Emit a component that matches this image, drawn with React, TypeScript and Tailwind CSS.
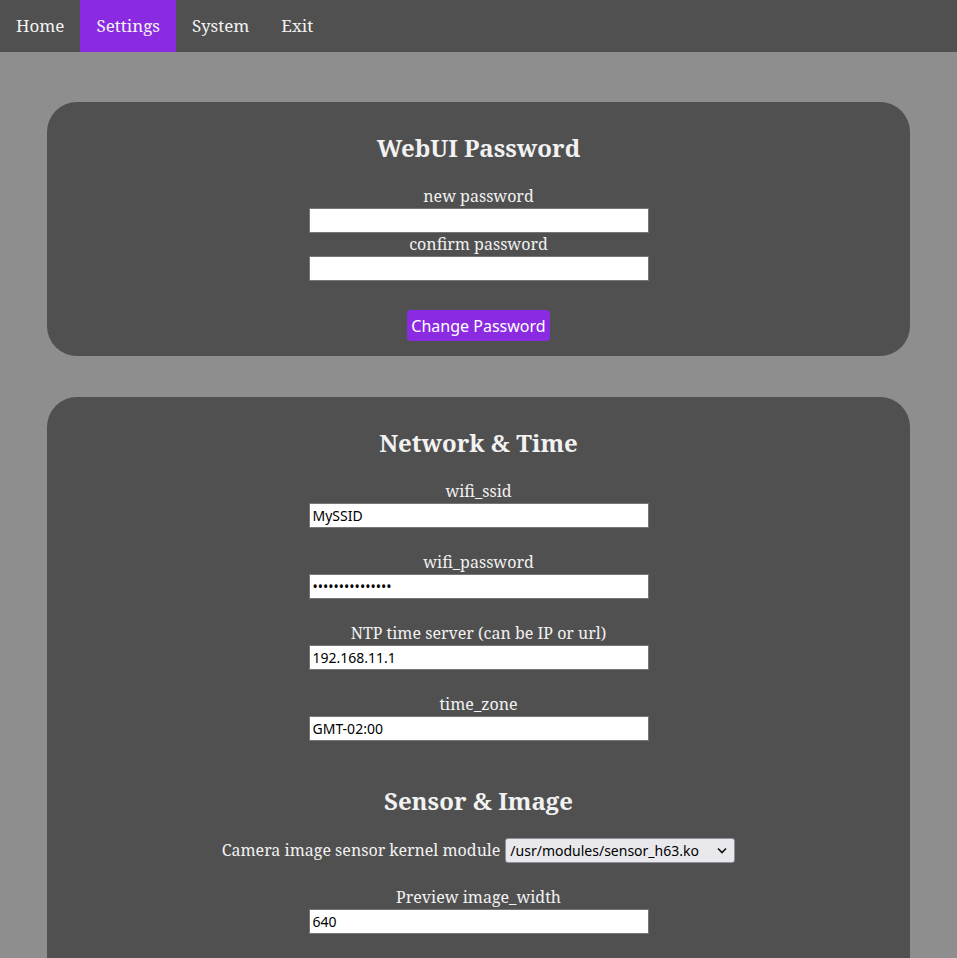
import React from 'react'

const serif = "font-['Noto_Serif','DejaVu_Serif',serif]"
const sans = "font-['Noto_Sans','Open_Sans',sans-serif]"

const inputCls = `block mx-auto w-[340px] h-[25px] bg-white border border-[#767676] px-[3px] text-[14px] text-black ${sans} outline-none`

interface FieldProps {
  label: string
  value?: string
  type?: string
  first?: boolean
}

const Field: React.FC<FieldProps> = ({ label, value = '', type = 'text', first = false }) => (
  <div className={first ? '' : 'mt-[23px]'}>
    <div className="leading-[23px] text-[16px]">{label}</div>
    <input type={type} defaultValue={value} className={inputCls} />
  </div>
)

const navItems = ['Home', 'Settings', 'System', 'Exit']

export default function App() {
  return (
    <div className={`min-h-screen bg-[#8e8e8e] text-[#f2f2f2] ${serif}`}>
      <nav className="flex h-[52px] bg-[#505050]">
        {navItems.map((item) => (
          <a
            key={item}
            className={`flex items-center px-4 text-[17px] ${item === 'Settings' ? 'bg-[#8a2be2]' : ''}`}
          >
            {item}
          </a>
        ))}
      </nav>

      <div className="mx-[47px] pt-[50px] pb-10">
        <section className="rounded-[30px] bg-[#505050] text-center pt-[28px] pb-[15px]">
          <h2 className="text-[24px] font-bold leading-[36px]">WebUI Password</h2>
          <div className="mt-[19px]">
            <div className="leading-[23px] text-[16px]">new password</div>
            <input type="password" className={inputCls} />
            <div className="leading-[23px] text-[16px]">confirm password</div>
            <input type="password" className={inputCls} />
          </div>
          <button
            className={`mt-[29px] h-[31px] px-1 rounded-[4px] bg-[#8a2be2] text-white text-[16px] ${sans}`}
          >
            Change Password
          </button>
        </section>

        <section className="mt-[41px] rounded-[30px] bg-[#505050] text-center pt-[28px] pb-[40px]">
          <h2 className="text-[24px] font-bold leading-[36px]">Network &amp; Time</h2>
          <div className="mt-[19px]">
            <Field label="wifi_ssid" value="MySSID" first />
            <Field label="wifi_password" value="aaaaaaaaaaaaaaa" type="password" />
            <Field label="NTP time server (can be IP or url)" value="192.168.11.1" />
            <Field label="time_zone" value="GMT-02:00" />
          </div>

          <h2 className="mt-[42px] text-[24px] font-bold leading-[36px]">Sensor &amp; Image</h2>
          <div className="mt-[19px] flex items-center justify-center gap-[5px] h-[25px]">
            <span className="text-[16px] leading-[23px]">Camera image sensor kernel module</span>
            <div className="relative">
              <select
                defaultValue="/usr/modules/sensor_h63.ko"
                className={`appearance-none block w-[230px] h-[25px] rounded-[3px] border border-[#8f8f9d] bg-[#e9e9ed] text-black text-[14px] pl-[4px] text-left ${sans}`}
              >
                <option>/usr/modules/sensor_h63.ko</option>
                <option>/usr/modules/sensor_h62.ko</option>
              </select>
              <svg
                className="pointer-events-none absolute right-[8px] top-[9px]"
                width="10"
                height="7"
                viewBox="0 0 10 7"
                fill="none"
              >
                <path d="M1 1.5 L5 5.5 L9 1.5" stroke="#111" strokeWidth="1.6" />
              </svg>
            </div>
          </div>
          <div className="mt-[23px]">
            <Field label="Preview image_width" value="640" first />
            <Field label="Preview image_height" value="360" />
            <Field label="Preview image_quality" value="80" />
          </div>
        </section>
      </div>
    </div>
  )
}
